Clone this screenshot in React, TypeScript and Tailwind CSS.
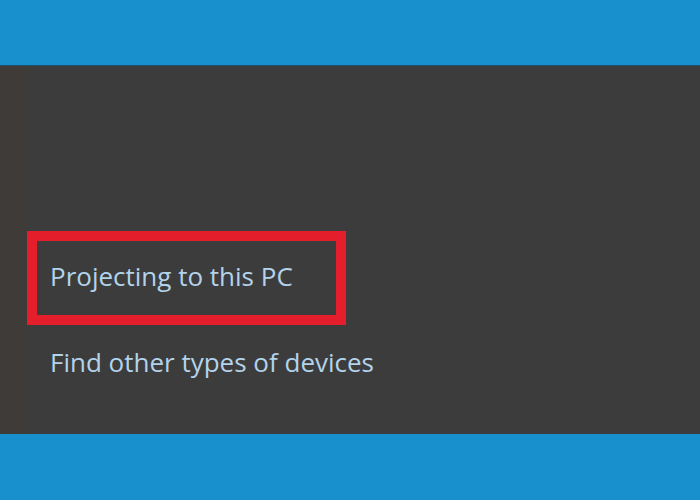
export default function App() {
  return (
    <div className="w-[700px] h-[500px] flex flex-col overflow-hidden" style={{ fontFamily: '"Open Sans", "Noto Sans", sans-serif' }}>
      <div className="h-[66px] bg-[#1790cd] border-b border-[#20506e]" />
      <div className="h-[368px] bg-[#3c3c3c] flex">
        <div className="w-[28px] bg-[#3e3b39]" />
        <div className="flex-1 flex flex-col pt-[165px]">
          <div className="w-[319px] h-[94px] border-[10px] border-[#e41e2a] flex items-start pt-[22px] pl-[13px] -ml-px">
            <span className="text-[26px] text-[#b3d3ea] leading-none">Projecting to this PC</span>
          </div>
          <div className="pl-[22px] mt-[24px]">
            <span className="text-[26px] text-[#b3d3ea] leading-none">Find other types of devices</span>
          </div>
        </div>
      </div>
      <div className="h-[66px] bg-[#1790cd]" />
    </div>
  );
}
